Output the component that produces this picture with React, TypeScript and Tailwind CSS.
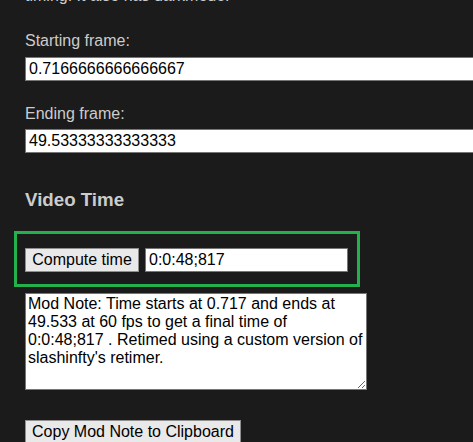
import React from "react";

export default function App() {
  const font = { fontFamily: '"Liberation Sans", Arial, sans-serif' };
  return (
    <div className="min-h-[442px] w-[473px] overflow-hidden bg-[#1b1b1b] text-[#cccccc]" style={font}>
      <div className="pl-[25px]">
        <div className="mt-[-13px] text-[16px] leading-[18px] whitespace-nowrap">timing. It also has darkmode.</div>

        <div className="mt-[27px] text-[16px] leading-[18px]">Starting frame:</div>
        <input
          className="mt-[7px] block h-[24px] w-[520px] border border-[#767676] bg-white pl-[3px] text-[16px] text-black outline-none"
          defaultValue="0.7166666666666667"
        />

        <div className="mt-[24px] text-[16px] leading-[18px]">Ending frame:</div>
        <input
          className="mt-[6px] block h-[24px] w-[520px] border border-[#767676] bg-white pl-[3px] text-[16px] text-black outline-none"
          defaultValue="49.53333333333333"
        />

        <h3 className="mt-[36px] text-[18.72px] font-bold leading-[22px]">Video Time</h3>
      </div>

      <div className="ml-[14px] mt-[20px] flex w-[346px] items-center gap-[6px] border-[3px] border-[#22b14c] pb-[12px] pl-[8px] pr-[9px] pt-[14px]">
        <button className="h-[24px] w-[114px] border border-[#8f8f8f] bg-[#e9e9e9] text-[16px] leading-[18px] text-black">
          Compute time
        </button>
        <input
          className="h-[24px] w-[203px] border border-[#767676] bg-white pl-[3px] text-[16px] text-black outline-none"
          defaultValue="0:0:48;817"
        />
      </div>

      <div className="pl-[25px]">
        <textarea
          className="mt-[6px] block h-[97px] w-[342px] border border-[#767676] bg-white px-[2px] py-[1px] text-[16px] leading-[18px] text-black outline-none"
          style={font}
          defaultValue="Mod Note: Time starts at 0.717 and ends at 49.533 at 60 fps to get a final time of 0:0:48;817 . Retimed using a custom version of slashinfty's retimer."
        />
        <button className="mt-[30px] h-[24px] w-[216px] border border-[#8f8f8f] bg-[#e9e9e9] text-[16px] leading-[18px] text-black">
          Copy Mod Note to Clipboard
        </button>
      </div>
    </div>
  );
}
